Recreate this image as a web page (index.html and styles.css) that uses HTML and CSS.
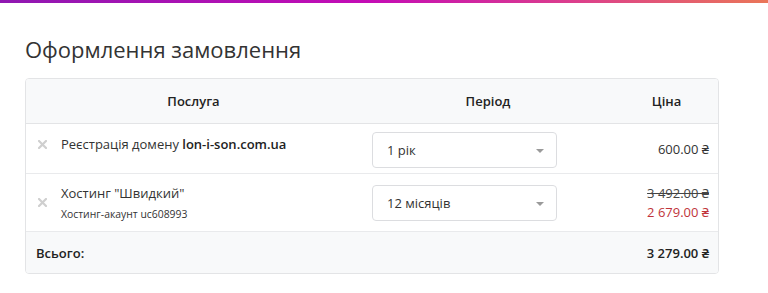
FILE: index.html
```html
<!DOCTYPE html>
<html lang="uk">
<head>
<meta charset="utf-8">
<link rel="stylesheet" href="styles.css">
</head>
<body>
<div class="topbar"></div>
<main class="page">
  <h1 class="title">Оформлення замовлення</h1>
  <div class="cart">
    <div class="row head">
      <div class="c-service">Послуга</div>
      <div class="c-period">Період</div>
      <div class="c-price">Ціна</div>
    </div>
    <div class="row item item-1">
      <div class="c-service">
        <svg class="rm" width="9" height="9" viewBox="0 0 9 9"><path d="M1 1L8 8M8 1L1 8" stroke="#cfcfcf" stroke-width="2.2" stroke-linecap="square"/></svg>
        <div class="name name-top">Реєстрація домену <b>lon-i-son.com.ua</b></div>
      </div>
      <div class="c-period">
        <div class="select"><span>1 рік</span><i class="caret"></i></div>
      </div>
      <div class="c-price"><div>600.00 ₴</div></div>
    </div>
    <div class="row item item-2">
      <div class="c-service">
        <svg class="rm" width="9" height="9" viewBox="0 0 9 9"><path d="M1 1L8 8M8 1L1 8" stroke="#cfcfcf" stroke-width="2.2" stroke-linecap="square"/></svg>
        <div class="name">
          <div>Хостинг "Швидкий"</div>
          <div class="sub">Хостинг-акаунт uc608993</div>
        </div>
      </div>
      <div class="c-period">
        <div class="select"><span>12 місяців</span><i class="caret"></i></div>
      </div>
      <div class="c-price">
        <div class="old">3 492.00 ₴</div>
        <div class="new">2 679.00 ₴</div>
      </div>
    </div>
    <div class="row total">
      <div class="t-label">Всього:</div>
      <div class="t-sum">3 279.00 ₴</div>
    </div>
  </div>
</main>
</body>
</html>
```

FILE: styles.css
```css
* { box-sizing: border-box; }
html, body { margin: 0; padding: 0; background: #fff; }
body {
  font-family: "Open Sans", "Noto Sans", sans-serif;
  color: #333;
  font-size: 13px;
  overflow: hidden;
}
.topbar {
  height: 3px;
  background: linear-gradient(90deg, #8f18b1 0%, #c40cb5 48%, #dc3f8c 75%, #ea7658 100%);
}
.page {
  padding: 33px 49px 0 25px;
}
.title {
  margin: 0 0 16px 0;
  font-weight: 400;
  font-size: 22px;
  line-height: 26px;
  color: #333;
}
.cart {
  border: 1px solid #e3e4e6;
  border-radius: 4px;
  overflow: hidden;
}
.row {
  display: flex;
  align-items: center;
  border-bottom: 1px solid #e9eaec;
}
.row:last-child { border-bottom: 0; }
.c-service { width: 335px; display: flex; align-items: center; padding-left: 12px; }
.c-period { width: 254px; padding-left: 11px; }
.c-price { flex: 1; text-align: right; padding-right: 9px; }
.head {
  height: 45px;
  background: #f8f9fa;
  font-weight: 600;
  font-size: 13px;
  color: #222;
  border-bottom: 1px solid #e3e4e6;
}
.head .c-service, .head .c-period, .head .c-price {
  justify-content: center;
  text-align: center;
  padding: 0;
}
.head .c-service { display: block; }
.item-1 { height: 50px; }
.item-2 { height: 58px; }
.rm { flex: none; margin-right: 14px; }
.name { font-size: 13px; line-height: 19px; }
.name b { font-weight: 600; color: #222; }
.name-top { margin-top: -9px; }
.item-1 .rm { margin-top: -9px; }
.sub { font-size: 10.4px; line-height: 15px; margin-top: 4px; }
.select {
  position: relative;
  width: 185px;
  height: 36px;
  border: 1px solid #dcdde0;
  border-radius: 4px;
  padding-left: 14px;
  display: flex;
  align-items: center;
  font-size: 13px;
  color: #333;
}
.item-1 .select { margin-top: 2px; }
.caret {
  position: absolute;
  right: 12px;
  top: 16px;
  width: 0;
  height: 0;
  border-left: 4px solid transparent;
  border-right: 4px solid transparent;
  border-top: 4px solid #9a9a9a;
}
.c-price { font-size: 13px; line-height: 19px; }
.item-1 .c-price { padding-top: 2px; }
.old { text-decoration: line-through; color: #444; }
.new { color: #c0343a; }
.total {
  height: 41px;
  background: #f8f9fa;
  justify-content: space-between;
  padding: 0 9px 0 10px;
  font-weight: 600;
  font-size: 13px;
  color: #222;
}
```
